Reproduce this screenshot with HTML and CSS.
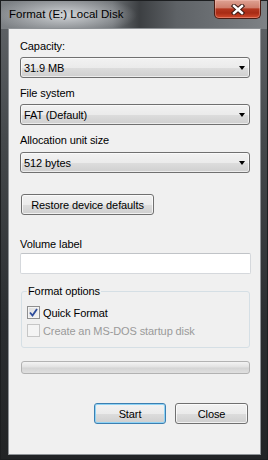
FILE: index.html
```html
<!DOCTYPE html>
<html lang="en">
<head>
    <meta charset="UTF-8">
    <title>Format (E:) Local Disk</title>
    <link rel="stylesheet" href="styles.css">
</head>
<body>
    <div class="window">
        <!-- Title bar -->
        <div class="titlebar">
            <span class="title">Format (E:) Local Disk</span>
            <button class="close-btn" title="Close">
                <svg width="14" height="11" viewBox="0 0 14 11">
                    <path d="M3 2 L11 9 M11 2 L3 9" stroke="#3b1a14" stroke-width="4.4" stroke-linecap="square"/>
                    <path d="M3 2 L11 9 M11 2 L3 9" stroke="#ffffff" stroke-width="2.4" stroke-linecap="square"/>
                </svg>
            </button>
        </div>

        <!-- Dialog body -->
        <div class="client">
            <label class="field-label first">Capacity:</label>
            <div class="combo"><span>31.9 MB</span><span class="arrow"></span></div>

            <label class="field-label">File system</label>
            <div class="combo"><span>FAT (Default)</span><span class="arrow"></span></div>

            <label class="field-label">Allocation unit size</label>
            <div class="combo alloc"><span>512 bytes</span><span class="arrow"></span></div>

            <button class="btn restore">Restore device defaults</button>

            <label class="field-label volume">Volume label</label>
            <input class="text-input" type="text">

            <fieldset class="group">
                <legend>Format options</legend>
                <div class="check">
                    <span class="box checked">
                        <svg width="9" height="9" viewBox="0 0 9 9">
                            <path d="M1 4.5 L3.5 7.5 L8 1" fill="none" stroke="#2d4c9c" stroke-width="1.8"/>
                        </svg>
                    </span>
                    Quick Format
                </div>
                <div class="check disabled">
                    <span class="box"></span>
                    Create an MS-DOS startup disk
                </div>
            </fieldset>

            <div class="progress"></div>

            <div class="actions">
                <button class="btn default">Start</button>
                <button class="btn close">Close</button>
            </div>
        </div>
    </div>
</body>
</html>
```

FILE: styles.css
```css
/* General */
body {
    margin: 0;
    padding: 0;
    background: #000;
    font-family: "Liberation Sans", Arial, sans-serif;
    font-size: 11px;
    letter-spacing: -0.1px;
    color: #000;
}

/* Window frame */
.window {
    width: 268px;
    height: 460px;
    box-sizing: border-box;
    display: flex;
    flex-direction: column;
    border: 1px solid #1c1e20;
    background:
        radial-gradient(ellipse 72px 20px at 64px 14px, rgba(214, 217, 220, 0.95), rgba(214, 217, 220, 0) 100%),
        linear-gradient(90deg, #7d8185 0, #6d7175 42%, #3c3f42 52%, #5e6266 66%, #7e8286 100%) top / 100% 28px no-repeat,
        linear-gradient(180deg, #62666a 0, #45494c 30%, #2b2e31 70%, #222426 100%);
}

.titlebar {
    height: 27px;
    display: flex;
    justify-content: space-between;
    align-items: flex-start;
    padding: 0 6px 0 8px;
}

.title {
    line-height: 27px;
    font-size: 11.5px;
    letter-spacing: 0;
    color: #000;
}

.close-btn {
    width: 47px;
    height: 19px;
    margin-top: -1px;
    padding: 0;
    border: 1px solid #4a1b12;
    border-top: none;
    border-radius: 0 0 5px 5px;
    background: linear-gradient(180deg, #dea293 0, #cf7f6d 42%, #b3371f 50%, #a72b15 72%, #d24a2c 100%);
    box-shadow: inset 0 0 0 1px rgba(255, 210, 200, 0.35);
    display: flex;
    align-items: center;
    justify-content: center;
}

/* Client area */
.client {
    flex: 1;
    margin: 0 6px 4px 7px;
    border: 1px solid #8e9296;
    background: #f0f0f0;
    padding: 0 11px;
    display: flex;
    flex-direction: column;
    align-items: flex-start;
}

.field-label {
    display: block;
    line-height: 15px;
    margin-top: 8px;
}

.field-label.first {
    margin-top: 10px;
}

.field-label.volume {
    margin-top: 22px;
}

/* Combo boxes */
.combo {
    box-sizing: border-box;
    width: 230px;
    height: 21px;
    margin-top: 3px;
    border: 1px solid #707070;
    border-radius: 3px;
    background: linear-gradient(180deg, #f2f2f2 0, #ebebeb 50%, #dddddd 51%, #cfcfcf 100%);
    box-shadow: inset 0 0 0 1px rgba(255, 255, 255, 0.6);
    display: flex;
    align-items: center;
    justify-content: space-between;
    padding: 0 4px 0 3px;
}

.combo.alloc {
    margin-top: 4px;
}

.arrow {
    width: 0;
    height: 0;
    border-left: 3.5px solid transparent;
    border-right: 3.5px solid transparent;
    border-top: 4px solid #000;
}

/* Buttons */
.btn {
    box-sizing: border-box;
    height: 21px;
    padding: 0;
    font-family: inherit;
    font-size: 11px;
    letter-spacing: -0.1px;
    color: #000;
    border: 1px solid #707070;
    border-radius: 3px;
    background: linear-gradient(180deg, #f2f2f2 0, #ebebeb 50%, #dddddd 51%, #cfcfcf 100%);
    box-shadow: inset 0 0 0 1px rgba(255, 255, 255, 0.7);
}

.restore {
    width: 133px;
    margin: 21px 0 0 1px;
}

.btn.default {
    width: 72px;
    border-color: #3c7fb1;
    box-shadow: inset 0 0 0 1px #8fd3f5;
}

.btn.close {
    width: 73px;
}

/* Text input */
.text-input {
    box-sizing: border-box;
    width: 231px;
    height: 21px;
    margin: 1px 0 0;
    border: 1px solid #d5d8dc;
    border-top-color: #c0c3c7;
    border-radius: 2px;
    background: #fff;
    font-family: inherit;
    font-size: 11px;
}

/* Group box */
.group {
    box-sizing: border-box;
    width: 229px;
    margin: 10px 0 0 1px;
    padding: 6px 5px 9px;
    border: 1px solid #d5dfe5;
    border-radius: 3px;
    min-inline-size: 0;
}

.group legend {
    padding: 0 1px;
    line-height: 15px;
}

.check {
    display: flex;
    align-items: center;
    height: 15px;
    gap: 3px;
}

.check + .check {
    margin-top: 3px;
}

.box {
    box-sizing: border-box;
    width: 13px;
    height: 13px;
    border: 1px solid #8f8f8f;
    background: linear-gradient(135deg, #dcdcdc 0, #f6f6f6 100%);
    box-shadow: inset 0 0 0 1px #f4f4f4;
    display: flex;
    align-items: center;
    justify-content: center;
}

.check.disabled {
    color: #9a9a9a;
}

.check.disabled .box {
    border-color: #c6c6c6;
    background: #f4f4f4;
    box-shadow: none;
}

/* Progress bar */
.progress {
    box-sizing: border-box;
    width: 229px;
    height: 13px;
    margin: 13px 0 0 1px;
    border: 1px solid #b2b2b2;
    border-radius: 3px;
    background: linear-gradient(180deg, #f3f3f3 0, #e2e2e2 45%, #d4d4d4 55%, #e0e0e0 100%);
}

/* Bottom buttons */
.actions {
    align-self: stretch;
    display: flex;
    justify-content: flex-end;
    gap: 9px;
    margin-top: 29px;
    padding-right: 1px;
}
```
